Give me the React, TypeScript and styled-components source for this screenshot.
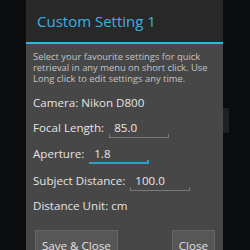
import React from 'react'
import styled, { createGlobalStyle } from 'styled-components'

const Global = createGlobalStyle`
  html, body {
    margin: 0;
    padding: 0;
    background: #0b0c0e;
  }
`

const Screen = styled.div`
  width: 250px;
  height: 250px;
  overflow: hidden;
  display: flex;
  padding-left: 26px;
  box-sizing: border-box;
  background: #0b0c0e;
  font-family: 'Open Sans', 'DejaVu Sans', sans-serif;
`

const Dialog = styled.div`
  width: 197px;
  height: 262px;
  display: flex;
  flex-direction: column;
  background: #474747;
  flex-shrink: 0;
`

const ScrollTab = styled.div`
  width: 6px;
  height: 25px;
  margin-top: 108px;
  background: #1f2022;
`

const TitleBar = styled.div`
  height: 42px;
  display: flex;
  align-items: center;
  padding-left: 11px;
  background: #282828;
  border-bottom: 2px solid #33b5e5;
  color: #33b5e5;
  font-size: 15px;
`

const Body = styled.div`
  padding: 7px 7px 0 7px;
  display: flex;
  flex-direction: column;
`

const Hint = styled.p`
  margin: 0;
  font-size: 9.4px;
  line-height: 11px;
  color: #c4c4c4;
`

const Line = styled.div<{ $top: number }>`
  margin-top: ${p => p.$top}px;
  height: 16px;
  display: flex;
  align-items: center;
  font-size: 11.6px;
  color: #e4e4e4;
  white-space: nowrap;
`

const Field = styled.span<{ $active?: boolean }>`
  position: relative;
  margin-left: 5px;
  width: 60px;
  padding-left: 5px;
  box-sizing: border-box;
  color: #e8e8e8;

  &::after {
    content: '';
    position: absolute;
    left: 0;
    right: 0;
    bottom: -3px;
    height: 4px;
    border-bottom: ${p => (p.$active ? '2px solid #2e9fc9' : '1px solid #7a7a7a')};
    border-left: ${p => (p.$active ? '0' : '1px solid #7a7a7a')};
    border-right: ${p => (p.$active ? '2px solid #2e9fc9' : '1px solid #7a7a7a')};
    box-sizing: border-box;
  }
`

const Buttons = styled.div`
  margin-top: 17px;
  display: flex;
  justify-content: space-between;
  padding: 0 1px 0 2px;
`

const Button = styled.div`
  height: 30px;
  padding: 0 6px;
  box-sizing: border-box;
  display: flex;
  align-items: center;
  background: #575757;
  border: 1px solid #666;
  border-bottom: none;
  color: #e2e2e2;
  font-size: 11.6px;
`

const App: React.FC = () => {
  return (
    <Screen>
      <Global />
      <Dialog>
        <TitleBar>Custom Setting 1</TitleBar>
        <Body>
          <Hint>
            Select your favourite settings for quick retrieval in any menu on short click. Use Long click to edit
            settings any time.
          </Hint>
          <Line $top={10}>Camera: Nikon D800</Line>
          <Line $top={9}>
            Focal Length:<Field>85.0</Field>
          </Line>
          <Line $top={10}>
            Aperture:<Field $active>1.8</Field>
          </Line>
          <Line $top={11}>
            Subject Distance:<Field>100.0</Field>
          </Line>
          <Line $top={9}>Distance Unit: cm</Line>
          <Buttons>
            <Button>Save &amp; Close</Button>
            <Button>Close</Button>
          </Buttons>
        </Body>
      </Dialog>
      <ScrollTab />
    </Screen>
  )
}

export default App
